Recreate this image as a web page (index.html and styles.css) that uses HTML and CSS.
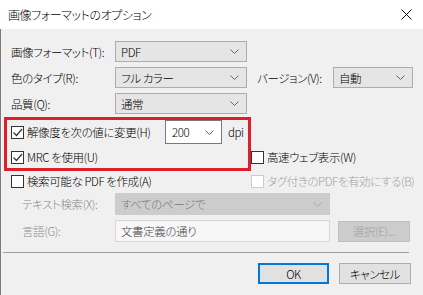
FILE: index.html
```html
<!DOCTYPE html>
<html lang="ja">
<head>
  <meta charset="UTF-8" />
  <title>画像フォーマットのオプション</title>
  <link rel="stylesheet" href="styles.css">
</head>
<body>
  <div class="titlebar">
    <span class="title">画像フォーマットのオプション</span>
    <svg class="close" width="11" height="11" viewBox="0 0 11 11">
      <path d="M0.5 0.5 L10.5 10.5 M10.5 0.5 L0.5 10.5" stroke="#111" stroke-width="1" fill="none"/>
    </svg>
  </div>

  <div class="dialog">
    <!-- red annotation over the resolution options -->
    <div class="mark"></div>

    <div class="row r1">
      <span class="label">画像フォーマット(T):</span>
      <div class="combo w-main"><span>PDF</span><svg class="chev" width="9" height="5" viewBox="0 0 9 5"><polyline points="0.5,0.5 4.5,4.5 8.5,0.5" fill="none" stroke="#666"/></svg></div>
    </div>

    <div class="row r2">
      <span class="label">色のタイプ(R):</span>
      <div class="combo w-main"><span>フル カラー</span><svg class="chev" width="9" height="5" viewBox="0 0 9 5"><polyline points="0.5,0.5 4.5,4.5 8.5,0.5" fill="none" stroke="#666"/></svg></div>
      <span class="label-v">バージョン(V):</span>
      <div class="combo w-ver"><span>自動</span><svg class="chev" width="9" height="5" viewBox="0 0 9 5"><polyline points="0.5,0.5 4.5,4.5 8.5,0.5" fill="none" stroke="#666"/></svg></div>
    </div>

    <div class="row r3">
      <span class="label">品質(Q):</span>
      <div class="combo w-main"><span>通常</span><svg class="chev" width="9" height="5" viewBox="0 0 9 5"><polyline points="0.5,0.5 4.5,4.5 8.5,0.5" fill="none" stroke="#666"/></svg></div>
    </div>

    <div class="row ra">
      <span class="check on"><svg width="11" height="11" viewBox="0 0 11 11"><polyline points="1.5,5.5 4.5,8.5 10,2" fill="none" stroke="#333" stroke-width="1.2"/></svg></span>
      <span class="clabel res-label">解像度を次の値に変更(H)</span>
      <div class="combo edit w-dpi"><span>200</span><svg class="chev" width="9" height="5" viewBox="0 0 9 5"><polyline points="0.5,0.5 4.5,4.5 8.5,0.5" fill="none" stroke="#666"/></svg></div>
      <span class="dpi">dpi</span>
    </div>

    <div class="row rb">
      <div class="cell-left">
        <span class="check on"><svg width="11" height="11" viewBox="0 0 11 11"><polyline points="1.5,5.5 4.5,8.5 10,2" fill="none" stroke="#333" stroke-width="1.2"/></svg></span>
        <span class="clabel">MRC を使用(U)</span>
      </div>
      <span class="check"></span>
      <span class="clabel">高速ウェブ表示(W)</span>
    </div>

    <div class="row rc">
      <div class="cell-left">
        <span class="check"></span>
        <span class="clabel">検索可能な PDF を作成(A)</span>
      </div>
      <span class="check off"></span>
      <span class="clabel muted">タグ付きのPDFを有効にする(B)</span>
    </div>

    <div class="row rd">
      <span class="label sub grey">テキスト検索(X):</span>
      <div class="combo disabled w-wide"><span>すべてのページで</span><svg class="chev" width="9" height="5" viewBox="0 0 9 5"><polyline points="0.5,0.5 4.5,4.5 8.5,0.5" fill="none" stroke="#aaa"/></svg></div>
    </div>

    <div class="row re">
      <span class="label sub grey">言語(G):</span>
      <div class="field w-wide">文書定義の通り</div>
      <button class="btn btn-off">選択(E)...</button>
    </div>

    <div class="sep"></div>

    <div class="row actions">
      <button class="btn btn-ok">OK</button>
      <button class="btn">キャンセル</button>
    </div>
  </div>
</body>
</html>
```

FILE: styles.css
```css
* { margin: 0; padding: 0; box-sizing: border-box; }

body {
  width: 423px;
  height: 295px;
  overflow: hidden;
  font-family: "Noto Sans CJK JP", "Noto Sans", sans-serif;
  font-size: 11.5px;
  font-weight: 300;
  letter-spacing: -0.4px;
  font-feature-settings: "palt";
  color: #000;
  background: #fff;
}

.titlebar {
  height: 29px;
  display: flex;
  align-items: center;
  justify-content: space-between;
  padding: 0 11px 0 8px;
  background: #fff;
}

.title { font-size: 12px; }

.dialog {
  position: relative;
  height: 266px;
  background: #f0f0f0;
  border-left: 1px solid #7a7a7a;
  padding: 12px 0 0 10px;
}

.mark {
  position: absolute;
  left: 3px;
  top: 88px;
  width: 247px;
  height: 54px;
  border: 3px solid #dc1f2b;
  pointer-events: none;
}

.row {
  display: flex;
  align-items: center;
  white-space: nowrap;
}

.r1, .r2, .r3 { height: 21px; }
.r2, .r3 { margin-top: 5px; }

.label {
  width: 104px;
  flex-shrink: 0;
}

.label.sub { padding-left: 11px; }
.grey { color: #8a8a8a; }

.combo {
  height: 21px;
  flex-shrink: 0;
  display: flex;
  align-items: center;
  justify-content: space-between;
  padding: 0 7px 0 5px;
  background: #e5e5e5;
  border: 1px solid #adadad;
}

.chev { flex-shrink: 0; }

.w-main { width: 132px; }
.w-ver { width: 80px; }
.w-wide { width: 215px; }

.label-v { width: 76px; margin-left: 10px; }

.ra {
  height: 24px;
  margin-top: 6px;
}

.combo.edit {
  height: 24px;
  background: #fff;
  border-color: #7a7a7a;
  padding-left: 6px;
}

.w-dpi { width: 57px; }

.res-label { width: 138px; }

.dpi { margin-left: 6px; }

.check {
  width: 13px;
  height: 13px;
  flex-shrink: 0;
  display: flex;
  align-items: center;
  justify-content: center;
  background: #fff;
  border: 1px solid #333;
}

.check.off { border-color: #cccccc; }

.clabel { margin-left: 3px; }
.muted { color: #a0a0a0; }

.rb, .rc { height: 18px; }
.rb { margin-top: 4px; }
.rc { margin-top: 6px; }

.cell-left {
  width: 240px;
  flex-shrink: 0;
  display: flex;
  align-items: center;
}

.rd {
  height: 22px;
  margin-top: 3px;
}

.combo.disabled {
  height: 22px;
  background: #cccccc;
  border-color: #cccccc;
  color: #7a7a7a;
}

.re {
  height: 22px;
  margin-top: 5px;
}

.field {
  height: 22px;
  flex-shrink: 0;
  display: flex;
  align-items: center;
  padding-left: 5px;
  background: #f7f7f7;
  border: 1px solid #d6d6d6;
  color: #444;
}

.btn {
  font: inherit;
  letter-spacing: inherit;
  font-feature-settings: "palt";
  width: 72px;
  height: 21px;
  background: #e1e1e1;
  border: 1px solid #adadad;
  color: #000;
}

.re .btn { margin-left: 8px; }

.btn-off {
  background: #cccccc;
  border-color: #bfbfbf;
  color: #a0a0a0;
}

.btn-ok {
  width: 71px;
  border: 2px solid #0078d7;
}

.sep {
  height: 1px;
  width: 406px;
  margin: 10px 0 0 -8px;
  background: #a0a0a0;
}

.actions {
  margin-top: 10px;
  justify-content: flex-end;
  gap: 10px;
  padding-right: 12px;
}
```
